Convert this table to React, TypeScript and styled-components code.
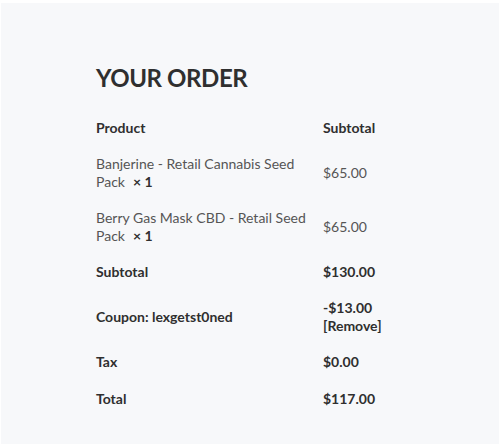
import React from "react";
import styled, { createGlobalStyle } from "styled-components";

const Global = createGlobalStyle`
  html, body { margin: 0; padding: 0; background: #ffffff; }
  body { font-family: "Lato", "Noto Sans", sans-serif; }
  * { box-sizing: border-box; }
`;

const Panel = styled.section`
  margin: 3px 1px 0 1px;
  width: 498px;
  height: 441px;
  background: #f7f8fa;
  padding: 60px 96px 0 95px;
`;

const Heading = styled.h3`
  margin: 0 0 17px 0;
  font-size: 24px;
  line-height: 30px;
  font-weight: 700;
  color: #2f2f2f;
  letter-spacing: -0.4px;
`;

const Table = styled.table`
  width: 100%;
  border-collapse: collapse;
  table-layout: fixed;
  font-size: 14px;
  line-height: 18px;
`;

const Cell = styled.td<{ $bold?: boolean; $right?: boolean }>`
  padding: 9px ${(p) => (p.$right ? "0" : "14px")} 9px 0;
  text-align: left;
  vertical-align: middle;
  font-weight: ${(p) => (p.$bold ? 700 : 400)};
  color: ${(p) => (p.$bold ? "#2f2f2f" : "#555555")};
`;

const LastRowCell = styled(Cell)`
  padding-top: 10px;
`;

const Qty = styled.strong`
  font-weight: 700;
  color: #2f2f2f;
  margin-left: 8px;
  white-space: nowrap;
`;

const items = [
  { name: "Banjerine - Retail Cannabis Seed Pack", price: "$65.00" },
  { name: "Berry Gas Mask CBD - Retail Seed Pack", price: "$65.00" },
];

export default function App() {
  return (
    <>
      <Global />
      <Panel>
        <Heading>YOUR ORDER</Heading>
        <Table>
          <colgroup>
            <col style={{ width: "227px" }} />
            <col />
          </colgroup>
          <thead>
            <tr>
              <Cell as="th" $bold>Product</Cell>
              <Cell as="th" $bold $right>Subtotal</Cell>
            </tr>
          </thead>
          <tbody>
            {items.map((it) => (
              <tr key={it.name}>
                <Cell>
                  {it.name}
                  <Qty>× 1</Qty>
                </Cell>
                <Cell $right>{it.price}</Cell>
              </tr>
            ))}
          </tbody>
          <tfoot>
            <tr>
              <Cell as="th" $bold>Subtotal</Cell>
              <Cell $bold $right>$130.00</Cell>
            </tr>
            <tr>
              <Cell as="th" $bold>Coupon: lexgetst0ned</Cell>
              <Cell $bold $right>
                -$13.00
                <br />
                [Remove]
              </Cell>
            </tr>
            <tr>
              <Cell as="th" $bold>Tax</Cell>
              <Cell $bold $right>$0.00</Cell>
            </tr>
            <tr>
              <LastRowCell as="th" $bold>Total</LastRowCell>
              <LastRowCell $bold $right>$117.00</LastRowCell>
            </tr>
          </tfoot>
        </Table>
      </Panel>
    </>
  );
}
